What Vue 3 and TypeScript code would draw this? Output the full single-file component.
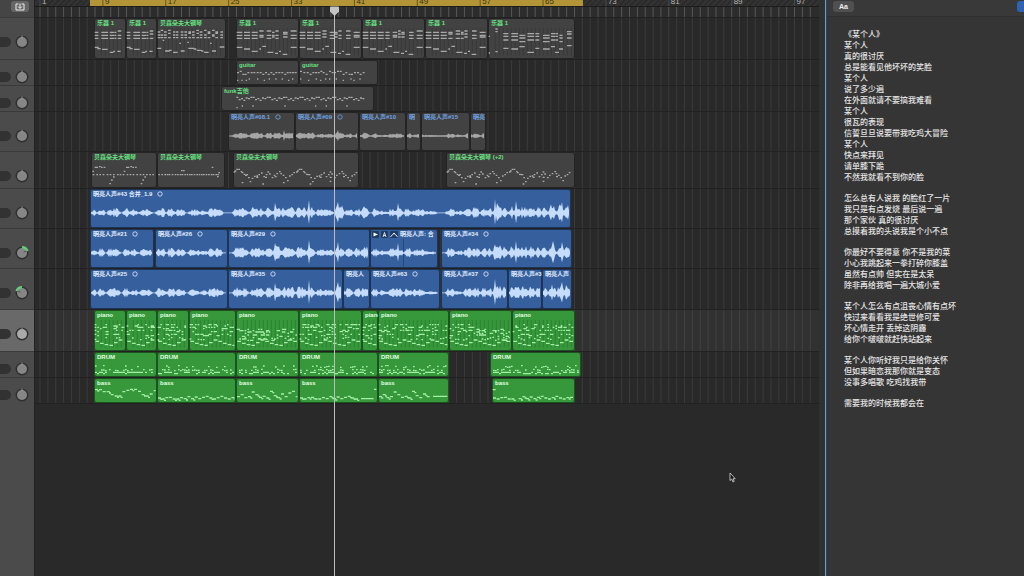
<script setup lang="ts">
type Tone = 'grey' | 'voice' | 'blue' | 'green'
type Art = 'chords' | 'guitar' | 'funk' | 'arp' | 'wave' | 'piano' | 'drum' | 'bass'

interface Clip { start: number; end: number; name: string; loop?: boolean; tools?: boolean }
interface Track { height: number; tone: Tone; art: Art; pan: number; selected?: boolean; clips: Clip[] }

const HEADER = 35
const BAR_ONE = 5
const BAR = 7.86

const clip = (start: number, end: number, name: string, loop = false): Clip => ({ start, end, name, loop })

const grand = '贝森朵夫大钢琴'
const vox = '明亮人声'

const tracks: Track[] = [
  { height: 42, tone: 'grey', art: 'chords', pan: 0, clips: [
    clip(94, 126, '乐器 1'), clip(126, 157, '乐器 1'), clip(157, 226, grand), clip(236, 299, '乐器 1'),
    clip(299, 362, '乐器 1'), clip(362, 425, '乐器 1'), clip(425, 488, '乐器 1'), clip(488, 575, '乐器 1') ] },
  { height: 26, tone: 'grey', art: 'guitar', pan: 0, clips: [clip(236, 299, 'guitar'), clip(299, 378, 'guitar')] },
  { height: 26, tone: 'grey', art: 'funk', pan: 0, clips: [clip(221, 374, 'funk吉他')] },
  { height: 40, tone: 'voice', art: 'wave', pan: 0, clips: [
    clip(228, 295, vox + '#08.1', true), clip(295, 359, vox + '#09', true), clip(359, 406, vox + '#10'),
    clip(406, 421, '明'), clip(421, 470, vox + '#15'), clip(470, 486, '明亮') ] },
  { height: 37, tone: 'grey', art: 'arp', pan: 0, clips: [
    clip(91, 157, grand), clip(157, 225, grand), clip(233, 359, grand), clip(446, 575, grand + ' (+2)') ] },
  { height: 40, tone: 'blue', art: 'wave', pan: 0, clips: [clip(90, 571, vox + '#43 合并_1.9', true)] },
  { height: 40, tone: 'blue', art: 'wave', pan: 1, clips: [
    clip(90, 154, vox + '#21', true), clip(155, 228, vox + '#26', true), clip(228, 370, vox + '#29', true),
    { start: 370, end: 438, name: vox + ': 合', tools: true }, clip(441, 572, vox + '#34', true) ] },
  { height: 41, tone: 'blue', art: 'wave', pan: -1, clips: [
    clip(90, 228, vox + '#25', true), clip(228, 343, vox + '#35', true), clip(343, 370, '明亮人'),
    clip(370, 440, vox + '#63', true), clip(441, 508, vox + '#37', true), clip(508, 542, vox + '#3'), clip(542, 572, vox) ] },
  { height: 42, tone: 'green', art: 'piano', pan: 0, selected: true, clips: [
    [94, 126], [126, 157], [157, 189], [189, 236], [236, 299], [299, 362], [362, 378], [378, 449], [449, 512], [512, 575],
  ].map(([a, b]) => clip(a, b, 'piano')) },
  { height: 26, tone: 'green', art: 'drum', pan: 0, clips: [
    [94, 157], [157, 236], [236, 299], [299, 378], [378, 449], [490, 581],
  ].map(([a, b]) => clip(a, b, 'DRUM')) },
  { height: 26, tone: 'green', art: 'bass', pan: 0, clips: [
    [94, 157], [157, 236], [236, 299], [299, 378], [378, 449], [492, 575],
  ].map(([a, b]) => clip(a, b, 'bass')) },
]

const bars = Array.from({ length: 99 }, (_, i) => ({ n: i + 1, x: BAR_ONE + i * BAR }))
const majors = bars.filter(b => b.n % 8 === 1)

/* Clips follow each other in the lane, so each one only needs the gap before it. */
function box(t: Track, i: number) {
  const c = t.clips[i]
  const before = i ? t.clips[i - 1].end : HEADER
  return { marginLeft: c.start - before + 'px', width: c.end - c.start + 'px' }
}

function random(seed: number) {
  let s = seed * 7919 + 13
  return () => {
    s = (s * 1103515245 + 12345) % 2147483648
    return s / 2147483648
  }
}

const note = (x: number, y: number, w: number) => `M${Math.round(x)} ${Math.round(y)}h${Math.round(w)}`

/* Note drawings use three units to the pixel. */
const chordCols = [[2, 17], [24, 18], [47, 18], [70, 13], [92, 14], [108, 8], [118, 10], [141, 14], [164, 18]]
const chordLow = [[2, 88, 17], [24, 93, 18], [47, 100, 18], [70, 93, 5], [79, 85, 11], [94, 103, 18], [117, 106, 9], [129, 100, 6], [140, 109, 14], [164, 88, 18]]
const shortCols = [[2, 11], [22, 20], [47, 14], [62, 5], [71, 11]]
const shortLow = [[2, 88, 12], [10, 92, 10], [24, 94, 17], [47, 103, 12], [58, 100, 5], [70, 100, 10]]
const arpShape = [[2, 54], [5, 51], [10, 46], [16, 46], [23, 53], [26, 56], [32, 61], [40, 62], [45, 71], [50, 83], [56, 73], [63, 67], [70, 66], [76, 62], [84, 57], [91, 68], [98, 62], [103, 54], [108, 60], [116, 71], [122, 64], [130, 59], [138, 53], [142, 59], [149, 64], [156, 71], [162, 80], [168, 66], [175, 62], [181, 56]]

function notes(art: Art, w: number, seed: number): string {
  const r = random(seed)
  const W = w * 3
  let d = ''
  const put = (x: number, y: number, len: number) => {
    if (x < W - 5) d += note(x, y, Math.min(len, W - 5 - x))
  }
  if (art === 'chords') {
    if (seed === 7) {
      for (const y of [33, 41]) put(22, y, 7)
      put(2, 55, 4); put(2, 105, 4); put(22, 101, 7)
      const cols = [[46, 15], [70, 20], [94, 18], [118, 20], [142, 12], [165, 20], [189, 12], [202, 8], [214, 10]]
      cols.forEach(([x, l], i) => { for (const y of [47, 55, 66]) put(x, y + (i % 3 === 2 ? 5 : 0), l) })
      const low = [[46, 91, 15], [70, 93, 20], [94, 86, 16], [118, 103, 20], [142, 91, 12], [165, 93, 20], [189, 86, 12], [201, 103, 12], [213, 93, 12], [237, 83, 14]]
      for (const [x, y, l] of low) put(x, y, l)
      for (const y of [41, 48, 60]) put(237, y, 14)
      return d
    }
    if (seed === 2) {
      const cols = [2, 11, 21, 33, 48, 57, 71, 82, 94, 105, 118, 128, 141, 152, 165, 175, 190]
      for (const x of cols) for (const y of [42, 51, 59]) put(x, y + (r() > .8 ? -5 : 0), x > 45 && x < 60 ? 7 : 8)
      for (const [x, y] of [[17, 67], [67, 76], [91, 73], [159, 76]]) put(x, y, 5)
      const low = [[1, 91, 12], [24, 99, 14], [36, 97, 8], [48, 103, 14], [71, 99, 12], [94, 91, 17], [110, 93, 8], [119, 97, 14], [133, 99, 6], [141, 103, 14], [165, 99, 12], [188, 87, 15]]
      for (const [x, y, l] of low) put(x, y, l)
      return d
    }
    const small = w < 40
    for (const [x, l] of small ? shortCols : chordCols) for (const y of [43, 52, 61]) put(x, y + (x > 65 && r() > .5 ? -4 : 0), l)
    for (const [x, y, l] of small ? shortLow : chordLow) put(x, y, l)
  } else if (art === 'guitar') {
    for (let x = 3; x < Math.min(W, 196); x += 7 + r() * 3) put(x, 38 + (r() > .75 ? -4 : r() > .7 ? 5 : 0), 6)
    for (let x = 3; x < Math.min(W, 196); x += 9 + r() * 16) put(x, 57 + (r() > .6 ? 4 : 0), 4)
  } else if (art === 'funk') {
    for (let x = 46, i = 0; x < 425; x += 7, i++) put(x, 38 + [-4, 3, 0, 5, -2, 0, -4][i % 7], 6)
    for (const x of [46, 62, 94, 190, 282, 314, 376]) put(x, x === 46 ? 65 : 60, 4)
  } else if (art === 'arp') {
    if (seed === 0) {
      for (const o of [0, 94]) for (const [x, y] of [[4, 58], [11, 46], [16, 46], [24, 44], [30, 46], [38, 46], [55, 95], [60, 84], [66, 75]]) put(x + o, y, 5)
      for (let x = 5; x < 190; x += 8 + r() * 4) put(x, 68, 5)
    } else if (seed === 1) {
      for (let x = 4; x < 188; x += 6 + r() * 3) put(x, 68, 5)
      for (const [x, y] of [[72, 56], [78, 56], [164, 46], [180, 74], [184, 62]]) put(x, y, 5)
    } else {
      for (const o of [0, 187]) for (const [x, y] of arpShape) put(x + o, y + 6, 5)
      for (const [x, y] of [[26, 92], [88, 96], [150, 92], [230, 96], [290, 88]]) put(x, y, 5)
      for (const [x, y] of [[36, 70], [70, 76], [96, 76], [125, 74], [224, 68], [260, 76], [290, 76], [330, 74]]) put(x, y, 6)
    }
  } else if (art === 'piano') {
    const shift = seed === 4 || seed === 8 ? 14 : 0
    for (let x = 2; x < W - 8; x += 8) {
      const dip = seed === 8 && x < 70 ? -14 : 0
      for (const y of [44, 52, 61, 73]) if (r() > .45) put(x, y + shift + dip + (r() > .7 ? 4 : 0), r() > .6 ? 10 : 5)
      if (r() > .6) put(x, 82 + r() * 8, 5)
    }
    for (let x = 4, i = 0; x < W - 10; x += 14, i++) put(x, 94 + [0, 6, 10, 12, 4, -4][i % 6], 11)
  } else if (art === 'drum') {
    for (let x = 3; x < W - 8; x += 6) {
      if (r() > .28) put(x, 61 + (r() > .65 ? 4 : 0), 6)
      if (r() > .5) put(x, 52 + r() * 4, 5)
      if (r() > .75) put(x, 41 + r() * 6, 5)
    }
  } else if (art === 'bass') {
    const shape = seed === 0
      ? [35, 35, 41, 41, 50, 54, 54, 41, 37, 34, 34, 40, 50, 54, 48, 38]
      : seed === 1 || seed === 3 || seed === 5
        ? [60, 63, 59, 58, 63, 63, 59, 62, 56, 62, 57, 62, 58, 55, 60, 63, 59, 55]
        : [56, 50, 59, 56, 42, 50, 58, 55, 60, 40, 53, 59, 48, 56, 45, 40]
    const step = seed === 0 ? 11.7 : 11
    const stop = seed === 3 ? 186 : seed === 4 ? 165 : W
    shape.concat(shape, shape).forEach((y, i) => {
      const x = 3 + i * step
      if (seed === 5 && x > 60 && x < 78) return
      if (x < stop - 8) { put(x, y, 9); if (r() > .5) put(x + 7, y + 4, 6) }
    })
    if (seed === 3) { put(186, 62, 38); put(225, 34, 12) }
    if (seed === 4) put(165, 55, 48)
    if (seed === 5) put(2, 35, 9)
  }
  return d
}

function stems(art: Art, w: number): string {
  if (art !== 'chords' && art !== 'piano') return ''
  let d = ''
  for (let x = 22; x < w * 3 - 6; x += 12) d += `M${x} 30V112`
  return d
}

const bursts = [
  [91, 97, 4], [98, 105, 5], [107, 120, 5], [123, 130, 5], [130, 138, 4], [139, 152, 4], [156, 166, 5], [167, 176, 5],
  [176, 185, 5], [188, 200, 4], [200, 208, 3], [208, 223, 5], [233, 248, 6], [250, 264, 6], [265, 273, 6], [273, 281, 8],
  [281, 295, 6], [296, 306, 7], [306, 315, 6], [316, 334, 4], [335, 344, 8], [345, 353, 5], [354, 361, 5], [361, 369, 7],
  [372, 379, 5], [379, 388, 3], [388, 403, 5], [404, 412, 5], [412, 425, 4], [424, 437, 2], [446, 455, 5], [455, 463, 3],
  [464, 472, 6], [472, 480, 6], [481, 487, 6], [487, 492, 7], [493, 502, 9], [502, 508, 7], [509, 514, 7], [514, 520, 9],
  [520, 528, 7], [528, 535, 7], [536, 541, 8], [541, 548, 6], [549, 556, 9], [557, 564, 9], [564, 570, 8],
]
const spikes: Record<number, number> = { 275: 10, 309: 13, 338: 11, 398: 10, 495: 14, 497: 10, 516: 12, 553: 12, 562: 11 }

function wave(c: Clip, row: number): string {
  const r = random(c.start + row * 31)
  const quiet = row === 3
  const up: string[] = []
  const down: string[] = []
  for (let x = c.start + 1; x < c.end - 1; x++) {
    let a = 0.4
    for (const [from, to, amp] of bursts) {
      if (x < from || x > to) continue
      const edge = Math.min(1, (Math.min(x - from, to - x) + 1) / 3)
      a = Math.max(a, amp * edge * (0.35 + r() * 0.65))
    }
    if (quiet) a = x < 232 ? 0.5 : Math.max(0.8, Math.min(a, 6) * 0.6)
    else if (spikes[x] && r() > .25) a = spikes[x]
    if (quiet && (x === 284 || x === 338)) a = 6
    const lx = x - c.start
    up.push(`${lx} ${(24 - a).toFixed(1)}`)
    down.unshift(`${lx} ${(24 + a * 0.85).toFixed(1)}`)
  }
  return `M${up.join('L')}L${down.join('L')}Z`
}

const lyrics: string[][] = [
  ['《某个人》', '某个人', '真的很讨厌', '总是能看见他坏坏的笑脸', '某个人', '说了多少遍', '在外面就请不要搞我难看', '某个人', '很瓦的表现', '信誓旦旦说要带我吃鸡大冒险', '某个人', '快点来拜见', '请单膝下跪', '不然我就看不到你的脸'],
  ['怎么总有人说我 的脸红了一片', '我只是有点发烧 最后说一遍', '那个家伙 真的很讨厌', '总摸着我的头说我是个小不点'],
  ['你最好不要得意 你不是我的菜', '小心我跳起来一拳打碎你膝盖', '虽然有点帅 但实在是太呆', '除非再给我唱一遍大城小爱'],
  ['某个人怎么有点沮丧心情有点坏', '快过来看看我是绝世修可爱', '坏心情走开 丢掉这阴霾', '给你个啵啵就赶快站起来'],
  ['某个人你听好我只是给你关怀', '但如果暗恋我那你就是变态', '没事多唱歌 吃鸡找我带'],
  ['需要我的时候我都会在'],
]
</script>

<template>
  <div class="studio">
    <aside class="heads">
      <div class="heads-bar">
        <button class="catch" type="button" aria-label="添加轨道">
          <svg width="10" height="8" viewBox="0 0 10 8" aria-hidden="true">
            <path d="M3.500 1H1V7H9V1H6.500" fill="none" stroke="#f0f0f0" />
            <path d="M5 0.500V5M3 3.500L5 5.500L7 3.500" fill="none" stroke="#f0f0f0" />
          </svg>
        </button>
      </div>
      <div
        v-for="(t, i) in tracks" :key="i" class="head" :class="{ selected: t.selected, low: t.height < 30 }"
        :style="{ height: t.height + 'px' }"
      >
        <input class="volume" type="range" :aria-label="'音量 ' + (i + 1)">
        <label class="knob">
          <input type="range" min="-1" max="1" step="0.1" :value="t.pan" :aria-label="'声像 ' + (i + 1)">
          <svg width="14" height="14" viewBox="0 0 14 14" aria-hidden="true">
            <circle cx="7" cy="7" r="6.5" fill="#303030" />
            <circle cx="7" cy="7" r="5" :fill="t.selected ? '#aaa' : '#868686'" />
            <path v-if="t.pan === 0" d="M7 0.500v3" stroke="#9a9a9a" />
            <path v-if="t.pan > 0" d="M7 1.2A5.8 5.8 0 0 1 12.5 5.2" fill="none" stroke="#62cf7c" stroke-width="2.4" />
            <path v-if="t.pan < 0" d="M7 1.2A5.8 5.8 0 0 0 1.5 5.2" fill="none" stroke="#62cf7c" stroke-width="2.4" />
            <path v-if="t.pan > 0" d="M8.5 6.2L11.500 5" stroke="#555" />
            <path v-if="t.pan < 0" d="M5.5 6.2L2.500 5" stroke="#555" />
          </svg>
        </label>
      </div>
    </aside>

    <main class="arrange">
      <div class="timeline">
        <svg class="grid" aria-hidden="true">
          <line v-for="b in bars" :key="b.n" :x1="b.x" :x2="b.x" y1="17" y2="100%" stroke="#3b3b3b" />
        </svg>
        <div class="ruler">
          <svg class="marks" width="100%" height="17">
            <rect x="0" y="7" width="100%" height="10" fill="#2c2c2c" />
            <rect x="55" y="0" width="493" height="6" fill="#b39538" />
            <rect x="0" y="6" width="100%" height="1" fill="#1c1c1c" />
            <line v-for="b in bars" :key="b.n" :x1="b.x" :x2="b.x" y1="7" y2="17" stroke="#585858" />
            <g v-for="b in majors" :key="b.n">
              <line :x1="b.x" :x2="b.x" y1="0" y2="6" :stroke="b.x > 56 && b.x < 548 ? '#6a571e' : '#4a4a4a'" />
              <text :x="b.x + 2" y="4" :fill="b.x > 56 && b.x < 548 ? '#3b300d' : '#b5b5b5'">{{ b.n }}</text>
            </g>
          </svg>
        </div>
        <div
          v-for="(t, row) in tracks" :key="row" class="lane" :class="{ selected: t.selected }"
          :style="{ height: t.height + 'px' }"
        >
          <div v-for="(c, i) in t.clips" :key="i" class="clip" :class="t.tone" :style="box(t, i)">
            <svg
              v-if="t.art === 'wave'" class="art" :width="c.end - c.start" :height="t.height - 2"
              :viewBox="`0 0 ${c.end - c.start} ${t.height - 2}`" aria-hidden="true"
            >
              <path v-if="c.tools" d="M33.5 10V37" stroke="#244878" />
              <path class="wave" :d="wave(c, row)" />
            </svg>
            <svg
              v-else class="art" :width="c.end - c.start" :height="t.height - 2"
              :viewBox="`0 0 ${(c.end - c.start) * 3} ${(t.height - 2) * 3}`" aria-hidden="true"
            >
              <path class="stems" :d="stems(t.art, c.end - c.start)" />
              <path class="notes" :d="notes(t.art, c.end - c.start, i)" />
            </svg>
            <div class="title" :class="{ tight: c.tools }">
              <svg v-if="c.tools" class="tools" width="26" height="7" viewBox="0 0 26 7" aria-hidden="true">
                <rect width="7" height="7" rx="1" /><rect x="9" width="7" height="7" rx="1" /><rect x="18" width="8" height="7" rx="1" />
                <path d="M1.500 1.5L6 3.5L1.500 5.5Z" fill="#fff" />
                <path d="M11 6L12.500 1.5L14 6M11.500 4.5H13.500" fill="none" stroke="#fff" stroke-width="0.8" />
                <path d="M18.500 5.5L20 4.5L22 2L24 4.500L25.500 5.500" fill="none" stroke="#fff" />
              </svg>
              <span>{{ c.name }}</span>
              <svg v-if="c.loop" class="loop" width="6" height="6" viewBox="0 0 6 6" aria-hidden="true">
                <circle cx="3" cy="3" r="2.2" fill="none" stroke="currentColor" stroke-width="0.8" />
              </svg>
            </div>
          </div>
        </div>
      </div>
      <svg class="playhead" width="11" viewBox="0 0 11 576" preserveAspectRatio="xMidYMin slice" aria-hidden="true">
        <path d="M5.500 12V4000" stroke="#c0bdb9" />
        <path d="M1 7.500Q1 6.500 2 6.500H9Q10 6.500 10 7.500V11.500L5.500 16L1 11.500Z" fill="#c4c4c4" />
      </svg>
      <svg class="cursor" width="7" height="11" viewBox="0 0 7 11" aria-hidden="true">
        <path d="M1 1V8.500L2.700 7L4 10L5.200 9.400L4 6.700H6.200Z" fill="#111" stroke="#ddd" stroke-width="0.8" />
      </svg>
    </main>

    <div class="gutter"></div>

    <section class="notepad">
      <header class="notepad-bar">
        <button class="font" type="button">Aa</button>
        <button class="edit" type="button" aria-label="编辑"></button>
      </header>
      <article class="lyrics">
        <p v-for="(verse, i) in lyrics" :key="i">
          <span v-for="(line, j) in verse" :key="j">{{ line }}</span>
        </p>
      </article>
    </section>
  </div>
</template>

<style>
body {
  margin: 0;
  background: #292929;
}
</style>

<style scoped>
.studio {
  display: flex;
  min-height: 100vh;
  overflow: hidden;
  background: #292929;
  color: #e6e6e6;
  font-family: "Liberation Sans", "Noto Sans CJK SC", sans-serif;
}
button,
input {
  margin: 0;
  padding: 0;
  border: 0;
  font: inherit;
}
.heads {
  flex: 0 0 35px;
  box-sizing: border-box;
  border-right: 1px solid #222;
  background: #4b4b4b;
}
.heads-bar {
  display: flex;
  justify-content: flex-end;
  box-sizing: border-box;
  height: 17px;
  padding: 1px 5px 0 0;
  background: #454545;
}
.catch {
  display: grid;
  place-items: center;
  width: 18px;
  height: 11px;
  border-radius: 3px;
  background: #666;
}
.head {
  display: flex;
  gap: 4px;
  box-sizing: border-box;
  padding-top: 17px;
  border-top: 1px solid #3a3a3a;
}
.head.low {
  padding-top: 10px;
}
.head.selected {
  background: #696969;
}
.volume {
  appearance: none;
  width: 11px;
  height: 10px;
  margin-top: 2px;
  border-radius: 0 5px 5px 0;
  background: #323232;
}
.volume::-webkit-slider-thumb {
  appearance: none;
  width: 0;
  height: 0;
}
.knob {
  display: grid;
  width: 14px;
  height: 14px;
}
.knob > * {
  grid-area: 1 / 1;
}
.knob input {
  width: 14px;
  height: 14px;
  opacity: 0;
}
.arrange {
  position: relative;
  flex: 1;
  min-width: 0;
  overflow: hidden;
}
.timeline {
  position: relative;
}
.grid {
  position: absolute;
  inset: 0;
  width: 100%;
  height: 100%;
}
.ruler {
  position: relative;
  height: 17px;
  overflow: hidden;
  background: repeating-linear-gradient(135deg, #2b2b2b 0 2px, #333 2px 4px);
}
.marks {
  display: block;
  font-size: 8px;
}
.lane {
  position: relative;
  display: flex;
  box-sizing: border-box;
  border-top: 1px solid #212121;
}
.lane:last-child {
  box-shadow: 0 1px #212121;
}
.lane.selected {
  background: rgba(255, 255, 255, 0.04);
}
.clip {
  display: grid;
  flex: none;
  box-sizing: border-box;
  overflow: hidden;
  border-radius: 3px;
  box-shadow: inset 0 0 0 1px rgba(0, 0, 0, 0.45);
}
.art,
.title {
  grid-area: 1 / 1;
}
.art {
  display: block;
}
.title {
  display: flex;
  align-items: center;
  gap: 5px;
  height: 10px;
  padding-left: 3px;
  overflow: hidden;
  font-size: 6px;
  font-weight: 700;
  line-height: 9px;
  white-space: pre;
}
.title.tight {
  gap: 2px;
  padding-left: 2px;
}
.loop {
  flex: none;
}
.tools {
  flex: none;
  fill: #1e3a66;
}
.notes {
  fill: none;
  stroke-width: 4;
}
.stems {
  fill: none;
  stroke-width: 2;
}
.grey {
  background: #424242;
  color: #66e080;
}
.grey .notes {
  stroke: #a9a9a9;
}
.grey .stems {
  stroke: #363636;
}
.voice {
  background: #424242;
  color: #70a4e6;
}
.voice .wave {
  fill: #a6a6a6;
}
.blue {
  background: #35609d;
  color: #e4eeff;
}
.blue .wave {
  fill: #c5dcfd;
}
.green {
  background: #36983b;
  color: #e2ffe2;
}
.green .notes {
  stroke: #a4efa6;
}
.green .stems {
  stroke: #28782d;
}
.playhead {
  position: absolute;
  top: 0;
  left: 294px;
  height: 100%;
  overflow: visible;
}
.cursor {
  position: absolute;
  top: 472px;
  left: 694px;
}
.gutter {
  flex: 0 0 6px;
  border-right: 1px solid #7799cf;
  background: #2f3030;
}
.notepad {
  flex: 0 0 198px;
  overflow: hidden;
  border-left: 1px solid #29406b;
  box-sizing: border-box;
  background: #353535;
}
.notepad-bar {
  display: flex;
  justify-content: space-between;
  box-sizing: border-box;
  height: 17px;
  padding: 1px 0 0 6px;
  border-bottom: 1px solid #303030;
  background: #393939;
}
.font {
  width: 21px;
  height: 11px;
  border-radius: 3px;
  background: #505050;
  color: #eee;
  font-size: 7px;
  font-weight: 700;
  line-height: 11px;
}
.edit {
  width: 7px;
  height: 11px;
  border-radius: 3px 0 0 3px;
  background: #2f62b0;
}
.lyrics {
  padding: 12px 0 0 17px;
  font-size: 8px;
  font-weight: 500;
  line-height: 11px;
}
.lyrics p {
  margin: 0 0 10px;
}
.lyrics span {
  display: block;
  white-space: nowrap;
}
</style>
